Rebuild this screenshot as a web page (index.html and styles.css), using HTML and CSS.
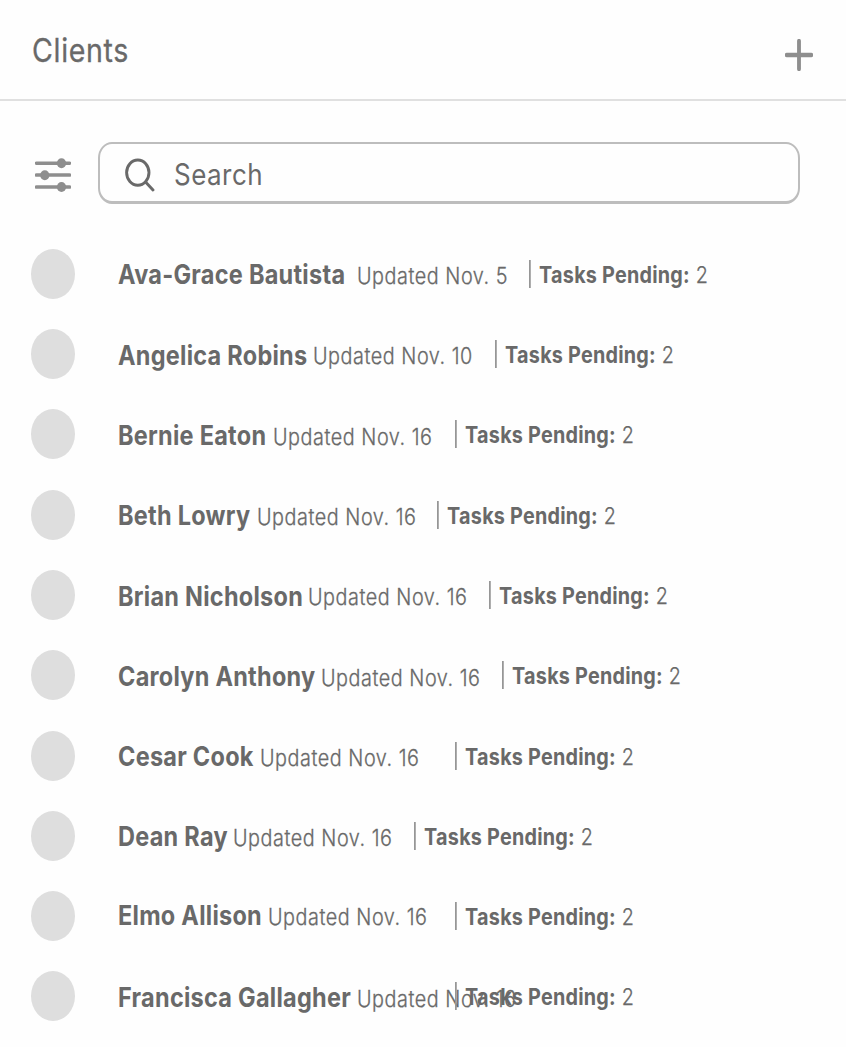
FILE: index.html
```html
<!DOCTYPE html>
<html lang="en">
<head>
<meta charset="utf-8">
<title>Clients</title>
<link rel="stylesheet" href="styles.css">
</head>
<body>
<div class="page">
  <header class="header">
    <h1 class="title">Clients</h1>
    <svg class="add" viewBox="0 0 32 32" preserveAspectRatio="none"><path d="M16 2V30M2 16H30"/></svg>
  </header>
  <div class="toolbar">
    <svg class="filter" viewBox="0 0 36 36" preserveAspectRatio="none"><path d="M1.5 6.2H34.5M1.5 18H34.5M1.5 30H34.5"/><ellipse cx="26.5" cy="6.2" rx="4.6" ry="5"/><ellipse cx="9.8" cy="18.2" rx="4.6" ry="5"/><ellipse cx="26.5" cy="30" rx="4.6" ry="5"/></svg>
    <div class="search">
      <svg class="lens" viewBox="0 0 30 34" preserveAspectRatio="none"><ellipse cx="12.8" cy="14.6" rx="11.2" ry="12.6"/><path d="M20.8 24.2L28 32"/></svg>
      <span class="placeholder">Search</span>
    </div>
  </div>
  <main class="list">
    <div class="row" style="--name:239px;--meta:171.5px"><i class="avatar"></i><b class="name">Ava-Grace Bautista</b><span class="updated">Updated Nov. 5</span><span class="tasks"><b>Tasks Pending:</b> 2</span></div>
    <div class="row" style="--name:195px;--meta:181px"><i class="avatar"></i><b class="name">Angelica Robins</b><span class="updated">Updated Nov. 10</span><span class="tasks"><b>Tasks Pending:</b> 2</span></div>
    <div class="row" style="--name:154.5px;--meta:182px"><i class="avatar"></i><b class="name">Bernie Eaton</b><span class="updated">Updated Nov. 16</span><span class="tasks"><b>Tasks Pending:</b> 2</span></div>
    <div class="row" style="--name:138.5px;--meta:179.5px"><i class="avatar"></i><b class="name">Beth Lowry</b><span class="updated">Updated Nov. 16</span><span class="tasks"><b>Tasks Pending:</b> 2</span></div>
    <div class="row" style="--name:190px;--meta:180.5px"><i class="avatar"></i><b class="name">Brian Nicholson</b><span class="updated">Updated Nov. 16</span><span class="tasks"><b>Tasks Pending:</b> 2</span></div>
    <div class="row" style="--name:203px;--meta:180.5px"><i class="avatar"></i><b class="name">Carolyn Anthony</b><span class="updated">Updated Nov. 16</span><span class="tasks"><b>Tasks Pending:</b> 2</span></div>
    <div class="row" style="--name:142px;--meta:194.5px"><i class="avatar"></i><b class="name">Cesar Cook</b><span class="updated">Updated Nov. 16</span><span class="tasks"><b>Tasks Pending:</b> 2</span></div>
    <div class="row" style="--name:115px;--meta:180.7px"><i class="avatar"></i><b class="name">Dean Ray</b><span class="updated">Updated Nov. 16</span><span class="tasks"><b>Tasks Pending:</b> 2</span></div>
    <div class="row raised" style="--name:150px;--meta:186.5px"><i class="avatar"></i><b class="name">Elmo Allison</b><span class="updated">Updated Nov. 16</span><span class="tasks"><b>Tasks Pending:</b> 2</span></div>
    <div class="row" style="--name:239px;--meta:97.5px"><i class="avatar"></i><b class="name">Francisca Gallagher</b><span class="updated">Updated Nov. 16</span><span class="tasks"><b>Tasks Pending:</b> 2</span></div>
  </main>
</div>
</body>
</html>
```
FILE: styles.css
```css
* { box-sizing: border-box; }
body {
  margin: 0;
  background: #fefefe;
  color: #696969;
  font-family: Inter, "Liberation Sans", sans-serif;
  overflow: hidden;
}
.page { width: 846px; height: 1047px; overflow: hidden; }
.header {
  height: 101px;
  padding: 0 33px 0 31.5px;
  display: flex;
  justify-content: space-between;
  border-bottom: 2px solid #e0e0e0;
}
.title {
  margin: 31px 0 0;
  font-size: 32.5px;
  line-height: 40px;
  font-weight: 400;
  letter-spacing: .75px;
  white-space: nowrap;
  transform: scaleX(.88);
  transform-origin: 0 0;
  -webkit-text-stroke: .3px #696969;
}
.add {
  width: 28px;
  height: 32px;
  margin-top: 39px;
  fill: none;
  stroke: #8e8e8e;
  stroke-width: 4.4;
  stroke-linecap: round;
}
.toolbar { display: flex; padding: 41px 46px 0 35px; }
.filter {
  width: 36px;
  height: 36px;
  margin-top: 15px;
  margin-right: 27px;
  fill: #8e8e8e;
  stroke: #8e8e8e;
  stroke-width: 3.6;
  stroke-linecap: round;
}
.filter ellipse { stroke: none; }
.search {
  flex: 1;
  height: 62px;
  display: flex;
  align-items: center;
  padding: 4px 0 0 25px;
  border: 2px solid #bdbdbd;
  border-bottom-width: 3px;
  border-radius: 14px / 16px;
}
.lens {
  width: 30px;
  height: 34px;
  margin-right: 19px;
  fill: none;
  stroke: #696969;
  stroke-width: 2.9;
  stroke-linecap: round;
}
.placeholder {
  margin-top: -2px;
  font-size: 29.5px;
  letter-spacing: .55px;
  transform: scaleX(.88);
  transform-origin: 0 50%;
}
.list { padding: 29.8px 0 0 31px; }
.row {
  height: 80.3px;
  display: grid;
  grid-template-columns: 87px var(--name) var(--meta) max-content;
  align-items: start;
  white-space: nowrap;
  line-height: 32px;
}
.avatar {
  width: 44px;
  height: 50px;
  margin-top: 15px;
  border-radius: 50%;
  background: #dedede;
}
.name, .updated, .tasks {
  width: max-content;
  transform: scaleX(.88);
  transform-origin: 0 0;
}
.name { margin: 24.6px 0 0 .3px; font-size: 26.7px; font-weight: 700; letter-spacing: .3px; }
.updated {
  margin: 26.4px 0 0 .3px;
  font-size: 22.5px;
  font-weight: 300;
  letter-spacing: .62px;
  -webkit-text-stroke: .3px #696969;
}
.raised .name { margin-top: 23.2px; }
.raised .updated { margin-top: 24.8px; }
.tasks {
  margin: 26px 0 0 .5px;
  padding-left: 9.5px;
  border-left: 2px solid #969696;
  height: 28px;
  line-height: 29.6px;
  font-size: 22.5px;
  font-weight: 300;
  letter-spacing: .25px;
  -webkit-text-stroke: .25px #696969;
}
.tasks b { font-weight: 700; -webkit-text-stroke: 0; }
```
